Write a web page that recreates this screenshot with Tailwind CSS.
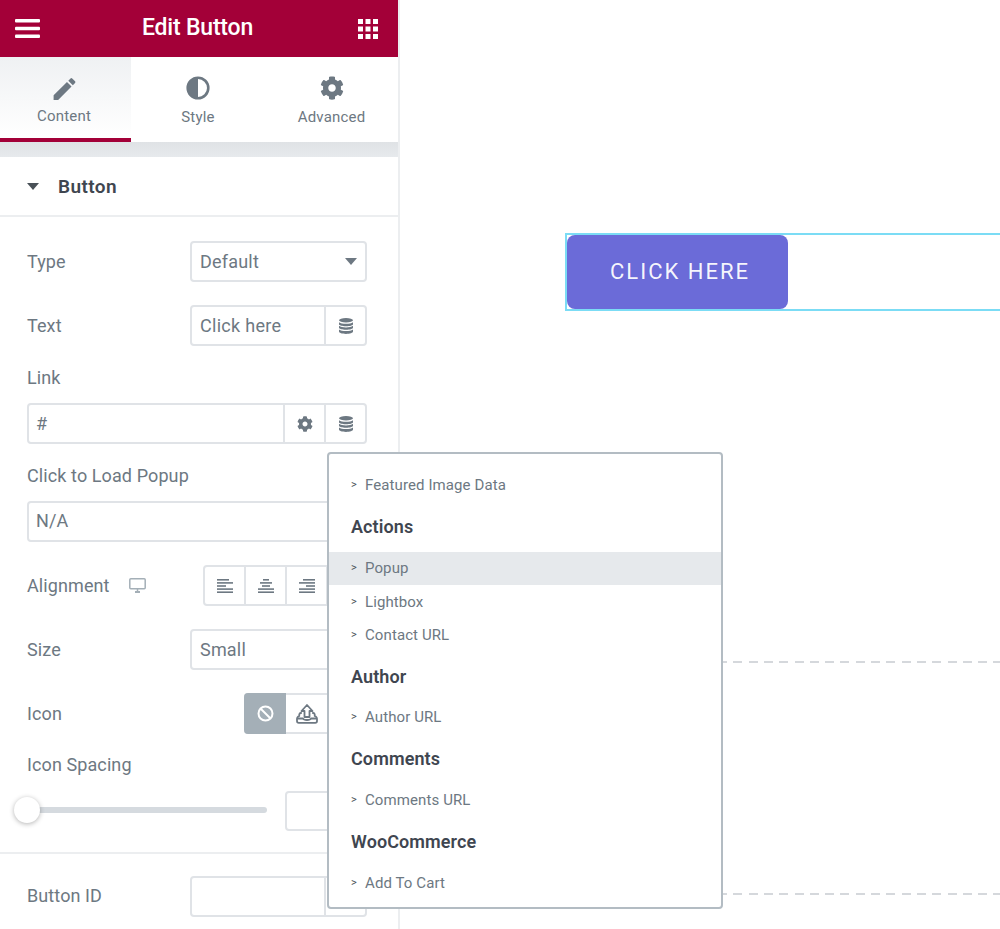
<!DOCTYPE html>
<html lang="en">
<head>
  <meta charset="UTF-8" />
  <meta name="viewport" content="width=device-width, initial-scale=1.0"/>
  <title>Edit Button</title>
  <script src="https://cdn.jsdelivr.net/npm/@tailwindcss/browser@4"></script>
</head>
<body class="bg-white font-['Roboto',sans-serif] text-[#6d7882] overflow-hidden">
<div class="relative flex w-[1000px] h-[929px] overflow-hidden">

  <!-- Sidebar -->
  <aside class="w-[400px] h-[929px] shrink-0 border-r-2 border-[#eceef0]">
    <header class="h-[57px] bg-[#a30038] flex items-center justify-between pl-[15px] pr-[20px] text-white">
      <svg class="w-[25px] h-[19px]" viewBox="0 0 25 19" fill="currentColor"><rect width="25" height="3.4" rx="1"/><rect y="7.8" width="25" height="3.4" rx="1"/><rect y="15.6" width="25" height="3.4" rx="1"/></svg>
      <h1 class="text-[23px] font-medium tracking-[-0.2px] mr-[3px]">Edit Button</h1>
      <svg class="w-[20px] h-[20px]" viewBox="0 0 20 20" fill="currentColor"><rect width="5" height="5"/><rect x="7.5" width="5" height="5"/><rect x="15" width="5" height="5"/><rect y="7.5" width="5" height="5"/><rect x="7.5" y="7.5" width="5" height="5"/><rect x="15" y="7.5" width="5" height="5"/><rect y="15" width="5" height="5"/><rect x="7.5" y="15" width="5" height="5"/><rect x="15" y="15" width="5" height="5"/></svg>
    </header>

    <!-- Tabs -->
    <nav class="flex h-[85px]">
      <div class="w-[131px] h-[85px] flex flex-col items-center pt-[20px] pr-[3px] bg-gradient-to-b from-[#eff1f3] to-white border-b-[4px] border-[#a30038]">
        <svg class="w-[23px] h-[24px]" viewBox="2.5 2.5 19 19" fill="currentColor"><path d="M3 17.25V21h3.75L17.81 9.94l-3.75-3.75L3 17.25zM20.71 7.04a1 1 0 0 0 0-1.41l-2.34-2.34a1 1 0 0 0-1.41 0l-1.83 1.83 3.75 3.75 1.83-1.83z"/></svg>
        <span class="text-[15px] leading-[20px] mt-[5px] tracking-[0.2px]">Content</span>
      </div>
      <div class="w-[134px] flex flex-col items-center pt-[19px]">
        <svg class="w-[24px] h-[24px]" viewBox="0 0 24 24"><circle cx="12" cy="12" r="10.3" fill="none" stroke="currentColor" stroke-width="2.6"/><path d="M12 2a10 10 0 0 0 0 20z" fill="currentColor"/></svg>
        <span class="text-[15px] leading-[20px] mt-[7px] tracking-[0.2px]">Style</span>
      </div>
      <div class="w-[133px] flex flex-col items-center pt-[19px]">
        <svg class="w-[24px] h-[24px]" viewBox="0 0 512 512" fill="currentColor"><path d="M487.4 315.7l-42.6-24.6c4.3-23.2 4.3-47 0-70.2l42.6-24.6c4.9-2.8 7.1-8.6 5.5-14-11.1-35.6-30-67.8-54.7-94.6-3.8-4.1-10-5.1-14.8-2.3L380.8 110c-17.9-15.4-38.5-27.3-60.8-35.1V25.8c0-5.6-3.9-10.5-9.4-11.7-36.7-8.2-74.3-7.8-109.2 0-5.5 1.2-9.4 6.1-9.4 11.7V75c-22.2 7.9-42.8 19.8-60.8 35.1L88.7 85.5c-4.9-2.8-11-1.9-14.8 2.3-24.7 26.7-43.6 58.9-54.7 94.6-1.7 5.4.6 11.2 5.5 14L67.3 221c-4.3 23.2-4.3 47 0 70.2l-42.6 24.6c-4.9 2.8-7.1 8.6-5.5 14 11.1 35.6 30 67.8 54.7 94.6 3.8 4.1 10 5.1 14.8 2.3l42.6-24.6c17.9 15.4 38.5 27.3 60.8 35.1v49.2c0 5.6 3.9 10.5 9.4 11.7 36.7 8.2 74.3 7.8 109.2 0 5.5-1.2 9.4-6.1 9.4-11.7v-49.2c22.2-7.9 42.8-19.8 60.8-35.1l42.6 24.6c4.9 2.8 11 1.9 14.8-2.3 24.7-26.7 43.6-58.9 54.7-94.6 1.5-5.5-.7-11.3-5.6-14.1zM256 336c-44.1 0-80-35.9-80-80s35.9-80 80-80 80 35.9 80 80-35.9 80-80 80z"/></svg>
        <span class="text-[15px] leading-[20px] mt-[7px] tracking-[0.2px]">Advanced</span>
      </div>
    </nav>
    <div class="h-[15px] bg-gradient-to-b from-[#dfe2e5] to-[#e7eaed]"></div>

    <!-- Section title -->
    <div class="h-[60px] flex items-center pl-[27px] border-b-2 border-[#eceef0]">
      <svg class="w-[12px] h-[7px]" viewBox="0 0 12 7" fill="#495157"><path d="M0 0h12L6 7z"/></svg>
      <h2 class="ml-[19px] pt-[2px] text-[19px] font-semibold tracking-[0.4px] text-[#3f4650]">Button</h2>
    </div>

    <!-- Controls -->
    <div class="pl-[27px] pr-[31px] pt-[24px] text-[18px] tracking-[0.1px]">
      <div class="flex items-center justify-between h-[41px]">
        <span>Type</span>
        <div class="w-[177px] h-[41px] border-2 border-[#e0e3e7] rounded-[4px] flex items-center justify-between pl-[8px] pr-[8px] tracking-[0.2px]">
          <span>Default</span>
          <svg class="w-[12px] h-[7px]" viewBox="0 0 12 7" fill="#6d7882"><path d="M0 0h12L6 7z"/></svg>
        </div>
      </div>

      <div class="flex items-center justify-between h-[41px] mt-[23px]">
        <span>Text</span>
        <div class="w-[177px] h-[41px] border-2 border-[#e0e3e7] rounded-[4px] flex items-center">
          <span class="flex-1 pl-[8px] tracking-[0.3px]">Click here</span>
          <div class="w-[41px] h-full border-l-2 border-[#e0e3e7] flex items-center justify-center">
            <svg class="w-[14px] h-[16px]" viewBox="0 0 14 16" fill="currentColor"><ellipse cx="7" cy="2.2" rx="7" ry="2.2"/><path d="M0 4.2c1.5 1.2 4 1.6 7 1.6s5.5-.4 7-1.6v2c0 1.1-3 2-7 2s-7-.9-7-2zM0 7.8c1.5 1.2 4 1.6 7 1.6s5.5-.4 7-1.6v2c0 1.1-3 2-7 2s-7-.9-7-2zM0 11.4c1.5 1.2 4 1.6 7 1.6s5.5-.4 7-1.6v2.2c0 1.3-3 2.4-7 2.4s-7-1.1-7-2.4z"/></svg>
          </div>
        </div>
      </div>

      <div class="leading-[26px] mt-[18.5px] mb-[12.5px]">Link</div>
      <div class="h-[41px] border-2 border-[#e0e3e7] rounded-[4px] flex items-center">
        <span class="flex-1 pl-[7px]">#</span>
        <div class="w-[41px] h-full border-l-2 border-[#e0e3e7] flex items-center justify-center">
          <svg class="w-[16px] h-[16px]" viewBox="0 0 512 512" fill="currentColor"><path d="M487.4 315.7l-42.6-24.6c4.3-23.2 4.3-47 0-70.2l42.6-24.6c4.9-2.8 7.1-8.6 5.5-14-11.1-35.6-30-67.8-54.7-94.6-3.8-4.1-10-5.1-14.8-2.3L380.8 110c-17.9-15.4-38.5-27.3-60.8-35.1V25.8c0-5.6-3.9-10.5-9.4-11.7-36.7-8.2-74.3-7.8-109.2 0-5.5 1.2-9.4 6.1-9.4 11.7V75c-22.2 7.9-42.8 19.8-60.8 35.1L88.7 85.5c-4.9-2.8-11-1.9-14.8 2.3-24.7 26.7-43.6 58.9-54.7 94.6-1.7 5.4.6 11.2 5.5 14L67.3 221c-4.3 23.2-4.3 47 0 70.2l-42.6 24.6c-4.9 2.8-7.1 8.6-5.5 14 11.1 35.6 30 67.8 54.7 94.6 3.8 4.1 10 5.1 14.8 2.3l42.6-24.6c17.9 15.4 38.5 27.3 60.8 35.1v49.2c0 5.6 3.9 10.5 9.4 11.7 36.7 8.2 74.3 7.8 109.2 0 5.5-1.2 9.4-6.1 9.4-11.7v-49.2c22.2-7.9 42.8-19.8 60.8-35.1l42.6 24.6c4.9 2.8 11 1.9 14.8-2.3 24.7-26.7 43.6-58.9 54.7-94.6 1.5-5.5-.7-11.3-5.6-14.1zM256 336c-44.1 0-80-35.9-80-80s35.9-80 80-80 80 35.9 80 80-35.9 80-80 80z"/></svg>
        </div>
        <div class="w-[41px] h-full border-l-2 border-[#e0e3e7] flex items-center justify-center">
          <svg class="w-[14px] h-[16px]" viewBox="0 0 14 16" fill="currentColor"><ellipse cx="7" cy="2.2" rx="7" ry="2.2"/><path d="M0 4.2c1.5 1.2 4 1.6 7 1.6s5.5-.4 7-1.6v2c0 1.1-3 2-7 2s-7-.9-7-2zM0 7.8c1.5 1.2 4 1.6 7 1.6s5.5-.4 7-1.6v2c0 1.1-3 2-7 2s-7-.9-7-2zM0 11.4c1.5 1.2 4 1.6 7 1.6s5.5-.4 7-1.6v2.2c0 1.3-3 2.4-7 2.4s-7-1.1-7-2.4z"/></svg>
        </div>
      </div>

      <div class="leading-[26px] mt-[18.5px] mb-[12.5px]">Click to Load Popup</div>
      <div class="h-[41px] border-2 border-[#e0e3e7] rounded-[4px] flex items-center pl-[7px] pb-[2px]">N/A</div>

      <div class="flex items-center justify-between h-[41px] mt-[23px]">
        <span class="flex items-center">Alignment
          <svg class="ml-[19px] w-[17px] h-[15px]" viewBox="0 0 17 15" fill="none" stroke="#a4afb7" stroke-width="1.5"><rect x="0.8" y="0.8" width="15.4" height="10" rx="1"/><path d="M6 14h5" stroke-width="2"/><path d="M8.5 11v3"/></svg>
        </span>
        <div class="w-[164px] h-[41px] border-2 border-[#e0e3e7] rounded-[4px] flex">
          <div class="w-[39px] flex items-center justify-center">
            <svg class="w-[16px] h-[14px]" viewBox="0 0 16 14" fill="currentColor"><rect width="12" height="1.6"/><rect y="3.1" width="16" height="1.6"/><rect y="6.2" width="9" height="1.6"/><rect y="9.3" width="16" height="1.6"/><rect y="12.4" width="16" height="1.6"/></svg>
          </div>
          <div class="w-[41px] border-l-2 border-[#e0e3e7] flex items-center justify-center">
            <svg class="w-[16px] h-[14px]" viewBox="0 0 16 14" fill="currentColor"><rect x="5" width="6" height="1.6"/><rect x="2" y="3.1" width="12" height="1.6"/><rect x="4" y="6.2" width="8" height="1.6"/><rect y="9.3" width="16" height="1.6"/><rect y="12.4" width="16" height="1.6"/></svg>
          </div>
          <div class="w-[41px] border-l-2 border-[#e0e3e7] flex items-center justify-center">
            <svg class="w-[16px] h-[14px]" viewBox="0 0 16 14" fill="currentColor"><rect x="4" width="12" height="1.6"/><rect y="3.1" width="16" height="1.6"/><rect x="7" y="6.2" width="9" height="1.6"/><rect y="9.3" width="16" height="1.6"/><rect y="12.4" width="16" height="1.6"/></svg>
          </div>
          <div class="flex-1 border-l-2 border-[#e0e3e7]"></div>
        </div>
      </div>

      <div class="flex items-center justify-between h-[41px] mt-[23px]">
        <span class="pb-[1px]">Size</span>
        <div class="w-[177px] h-[41px] border-2 border-[#e0e3e7] rounded-[4px] flex items-center pl-[8px] pb-[1px] tracking-[0.2px]">Small</div>
      </div>

      <div class="flex items-center justify-between h-[41px] mt-[23px]">
        <span class="pb-[1px]">Icon</span>
        <div class="w-[123px] h-[41px] border-2 border-l-0 border-[#e0e3e7] rounded-[4px] flex">
          <div class="w-[42px] -my-[2px] bg-[#a4afb7] rounded-l-[4px] flex items-center justify-center">
            <svg class="w-[17px] h-[17px]" viewBox="0 0 17 17" fill="none" stroke="white" stroke-width="2"><circle cx="8.5" cy="8.5" r="7"/><path d="M3.5 3.5l10 10"/></svg>
          </div>
          <div class="w-[41px] flex items-center justify-center">
            <svg class="w-[22px] h-[20px]" viewBox="0 0 22 20" fill="none" stroke="currentColor" stroke-width="1.8" stroke-linejoin="round"><path d="M11 1L5.5 7h3v6h5V7h3z" fill="white"/><path d="M5.8 9H5C3.500 9 3 10.500 3.300 12 1.800 12.500 1 13.500 1 15v2c0 1 .8 1.800 1.800 1.800h16.400c1 0 1.800-.8 1.800-1.800v-2c0-1.500-.8-2.500-2.300-3 .3-1.500-.2-3-1.700-3h-.8"/><path d="M1.500 14.500H7c.4 1 2 1.500 4 1.500s3.600-.5 4-1.500h5.500"/></svg>
          </div>
          <div class="flex-1 border-l-2 border-[#e0e3e7]"></div>
        </div>
      </div>

      <div class="leading-[26px] mt-[18px]">Icon Spacing</div>
      <div class="flex items-center justify-between h-[41px] mt-[12px]">
        <div class="relative w-[240px] h-[6px] mb-[2px] bg-[#d5dadf] rounded-full">
          <div class="absolute -left-[13px] -top-[10px] w-[26px] h-[26px] bg-white rounded-full shadow-[0_1px_5px_rgba(0,0,0,0.3)]"></div>
        </div>
        <div class="w-[82px] h-[40px] border-2 border-[#e0e3e7] rounded-[4px]"></div>
      </div>
    </div>

    <div class="mt-[21px] border-t-2 border-[#eceef0]"></div>

    <div class="pl-[27px] pr-[31px] pt-[22px] text-[18px] tracking-[0.1px]">
      <div class="flex items-center justify-between h-[41px]">
        <span class="pb-[2px]">Button ID</span>
        <div class="w-[177px] h-[41px] border-2 border-[#e0e3e7] rounded-[4px] flex">
          <div class="flex-1"></div>
          <div class="w-[41px] border-l-2 border-[#e0e3e7]"></div>
        </div>
      </div>
    </div>
  </aside>

  <!-- Canvas -->
  <main class="flex-1 pl-[165px] pt-[233px]">
    <div class="h-[78px] border-2 border-r-0 border-[#7bdcf5]">
      <a class="w-[221px] h-[74px] bg-[#6b6bd8] rounded-[8px] flex items-center justify-center text-white/95 text-[22px] tracking-[2px] pl-[5px] pb-[2px]">CLICK HERE</a>
    </div>
    <div class="mt-[350px] h-[2px] bg-[repeating-linear-gradient(90deg,#d5d8dc_0,#d5d8dc_9px,transparent_9px,transparent_15.3px)]"></div>
    <div class="mt-[230px] h-[2px] bg-[repeating-linear-gradient(90deg,#d5d8dc_0,#d5d8dc_9px,transparent_9px,transparent_15.3px)]"></div>
  </main>

  <!-- Dynamic tags popup -->
  <div class="absolute left-[327px] top-[452px] w-[396px] h-[457px] bg-white border-2 border-[#b3bcc3] rounded-[4px] pt-[15px] text-[15px] tracking-[0.1px]">
    <div class="h-[33px] flex items-center pl-[22px]"><span class="w-[14px] text-[11px] text-[#495157]">&gt;</span>Featured Image Data</div>
    <div class="h-[50px] flex items-center pl-[22px] pb-[2px] text-[18px] font-semibold text-[#3f4650]">Actions</div>
    <div class="h-[33px] flex items-center pl-[22px] bg-[#e6e9ec]"><span class="w-[14px] text-[11px] text-[#495157]">&gt;</span>Popup</div>
    <div class="h-[34px] flex items-center pl-[22px]"><span class="w-[14px] text-[11px] text-[#495157]">&gt;</span>Lightbox</div>
    <div class="h-[33px] flex items-center pl-[22px]"><span class="w-[14px] text-[11px] text-[#495157]">&gt;</span>Contact URL</div>
    <div class="h-[49px] flex items-center pl-[22px] text-[18px] font-semibold text-[#3f4650]">Author</div>
    <div class="h-[33px] flex items-center pl-[22px]"><span class="w-[14px] text-[11px] text-[#495157]">&gt;</span>Author URL</div>
    <div class="h-[50px] flex items-center pl-[22px] pb-[2px] text-[18px] font-semibold text-[#3f4650]">Comments</div>
    <div class="h-[33px] flex items-center pl-[22px]"><span class="w-[14px] text-[11px] text-[#495157]">&gt;</span>Comments URL</div>
    <div class="h-[50px] flex items-center pl-[22px] pb-[2px] text-[18px] font-semibold text-[#3f4650]">WooCommerce</div>
    <div class="h-[33px] flex items-center pl-[22px]"><span class="w-[14px] text-[11px] text-[#495157]">&gt;</span>Add To Cart</div>
  </div>
</div>
</body>
</html>
